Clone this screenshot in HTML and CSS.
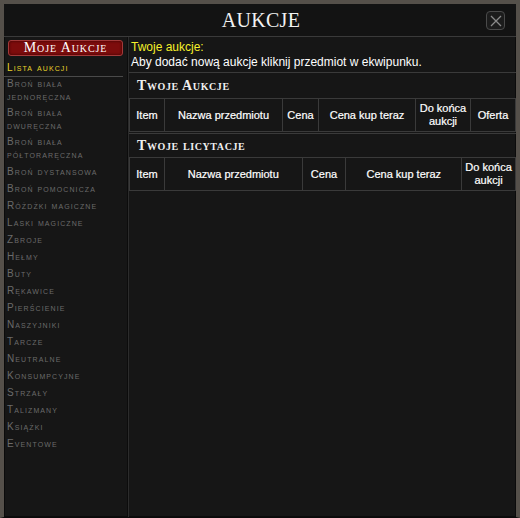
FILE: index.html
```html
<!DOCTYPE html>
<html lang="pl">
<head>
    <meta charset="UTF-8">
    <meta name="viewport" content="width=device-width, initial-scale=1.0">
    <title>Aukcje</title>
    <link rel="stylesheet" href="styles.css">
</head>
<body>
<div id="auction">
    <div class="header">
        <h1 class="title">Aukcje</h1>
        <a class="close">
            <svg width="12" height="12" viewBox="0 0 12 12"><path d="M1 1L11 11M11 1L1 11" stroke="#8a8a8a" stroke-width="1.3" fill="none"/></svg>
        </a>
    </div>
    <div class="body">
        <div class="side">
            <a class="myBtn">Moje Aukcje</a>
            <a class="listLink">Lista aukcji</a>
            <ul class="cats">
                <li>Broń biała jednoręczna</li>
                <li>Broń biała dwuręczna</li>
                <li>Broń biała półtoraręczna</li>
                <li>Broń dystansowa</li>
                <li>Broń pomocnicza</li>
                <li>Różdżki magiczne</li>
                <li>Laski magiczne</li>
                <li>Zbroje</li>
                <li>Hełmy</li>
                <li>Buty</li>
                <li>Rękawice</li>
                <li>Pierścienie</li>
                <li>Naszyjniki</li>
                <li>Tarcze</li>
                <li>Neutralne</li>
                <li>Konsumpcyjne</li>
                <li>Strzały</li>
                <li>Talizmany</li>
                <li>Książki</li>
                <li>Eventowe</li>
            </ul>
        </div>
        <div class="main">
            <div class="info">
                <span class="yellow">Twoje aukcje:</span><br>
                Aby dodać nową aukcje kliknij przedmiot w ekwipunku.
            </div>
            <h2 class="section">Twoje Aukcje</h2>
            <table class="grid">
                <tr>
                    <th class="c-item">Item</th>
                    <th class="c-name">Nazwa przedmiotu</th>
                    <th class="c-price">Cena</th>
                    <th class="c-buy">Cena kup teraz</th>
                    <th class="c-end">Do końca aukcji</th>
                    <th class="c-offer">Oferta</th>
                </tr>
            </table>
            <h2 class="section second">Twoje licytacje</h2>
            <table class="grid">
                <tr>
                    <th class="c-item">Item</th>
                    <th class="c-name2">Nazwa przedmiotu</th>
                    <th class="c-price2">Cena</th>
                    <th class="c-buy2">Cena kup teraz</th>
                    <th class="c-end2">Do końca aukcji</th>
                </tr>
            </table>
        </div>
    </div>
</div>
</body>
</html>
```

FILE: styles.css
```css
html, body {
    margin: 0;
    background: #000;
}

#auction {
    width: 520px;
    height: 518px;
    box-sizing: border-box;
    border: 4px solid #55504a;
    border-bottom: 1px solid #0a0a0a;
    background: #161616;
    display: flex;
    flex-direction: column;
    font-family: "Liberation Sans", Arial, sans-serif;
    color: #fff;
    box-shadow: inset 0 0 0 1px #0b0b0b;
}

.header {
    position: relative;
    height: 32px;
    background: #131313;
    border-bottom: 1px solid #3a3a3a;
    display: flex;
    align-items: center;
    justify-content: center;
}

.title {
    margin: 0;
    font: normal 20px/1 "Liberation Serif", serif;
    text-transform: uppercase;
    letter-spacing: .3px;
    color: #f2f2f2;
    padding-left: 2px;
}

.close {
    position: absolute;
    right: 11px;
    top: 7px;
    width: 17px;
    height: 17px;
    border: 1px solid #4a4a4a;
    border-radius: 4px;
    background: #1c1c1c;
    display: flex;
    align-items: center;
    justify-content: center;
}

.body {
    flex: 1;
    display: flex;
}

.side {
    width: 123px;
    flex: none;
    border-right: 1px solid #0c0c0c;
    box-shadow: 1px 0 0 #2c2c2c;
    padding-top: 3px;
}

.myBtn {
    display: block;
    margin: 0 4px;
    height: 14px;
    border: 1px solid #a23a3a;
    border-radius: 3px;
    background: #7d0c0c;
    box-shadow: inset 0 0 3px #3a0000;
    text-align: center;
    font: 14px/14px "Liberation Serif", serif;
    font-variant: small-caps;
    color: #fff;
    letter-spacing: .9px;
}

.listLink {
    display: block;
    margin: 5px 4px 0 0;
    padding: 0 0 2px 3px;
    border-bottom: 1px solid #4a4a4a;
    font-size: 10px;
    line-height: 13px;
    font-variant: small-caps;
    letter-spacing: 1.1px;
    color: #e8d22a;
}

.cats {
    margin: -1px 0 0;
    padding: 0;
    list-style: none;
}

.cats li {
    padding: 2px 9px 2px 3px;
    font-size: 10px;
    line-height: 13px;
    font-variant: small-caps;
    letter-spacing: 1.1px;
    color: #6b6b6b;
}

.cats li:nth-child(-n+3) {
    line-height: 12.5px;
}

.main {
    flex: 1;
    padding-left: 1px;
}

.info {
    padding: 3px 2px 2px;
    font-size: 12px;
    line-height: 15px;
    border-bottom: 1px solid #3a3a3a;
}

.yellow {
    color: #f5f02a;
}

.section {
    margin: 0;
    padding: 0 8px;
    height: 25px;
    font: bold 14px/25px "Liberation Serif", serif;
    font-variant: small-caps;
    letter-spacing: .6px;
    color: #f0f0f0;
}

.section.second {
    height: 23px;
    line-height: 24px;
    border-top: 1px solid #3a3a3a;
    margin-top: 1px;
}

.grid {
    width: 100%;
    border-collapse: collapse;
}

.grid th {
    border: 1px solid #3a3a3a;
    height: 32px;
    padding: 0 3px;
    font-size: 11px;
    font-weight: normal;
    line-height: 13px;
    color: #fff;
    -webkit-text-stroke: .2px #fff;
}

.c-item { width: 28px; }
.c-name { width: 111px; }
.c-price { width: 29px; }
.c-buy { width: 90px; }
.c-end { width: 48px; }
.c-name2 { width: 131px; }
.c-price2 { width: 37px; }
.c-buy2 { width: 109px; }
.c-end2 { width: 47px; }
```
